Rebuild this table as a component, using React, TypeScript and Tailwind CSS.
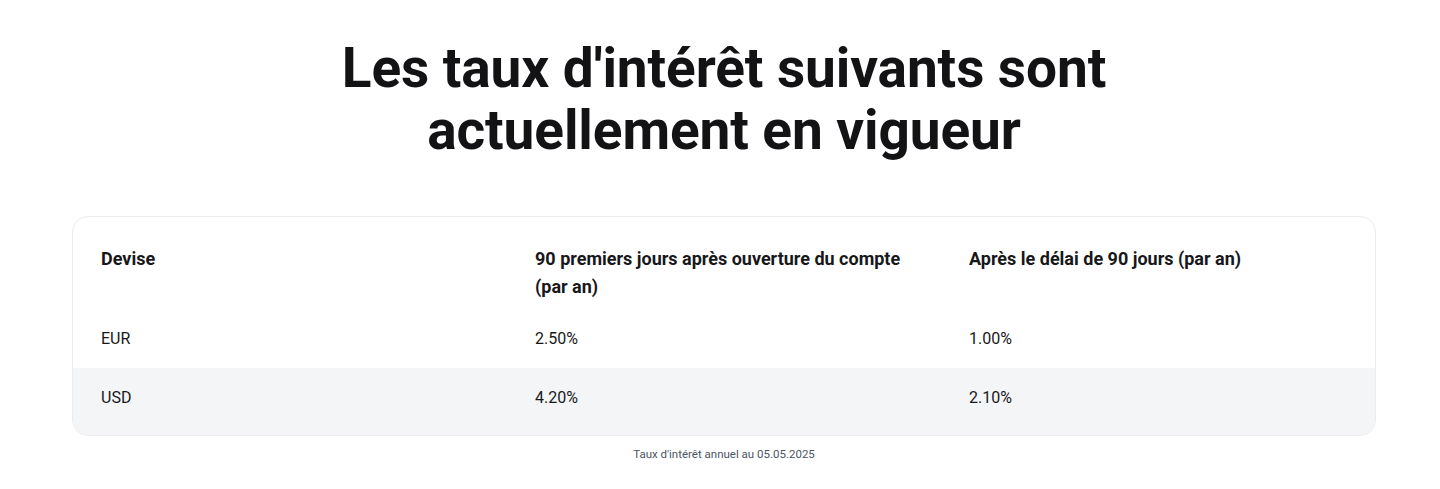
const ROWS = [
  { currency: "EUR", first: "2.50%", after: "1.00%" },
  { currency: "USD", first: "4.20%", after: "2.10%" },
];

export default function App() {
  return (
    <div className="min-h-screen bg-white pt-[37px] font-['Roboto',sans-serif] text-[#18181b]">
      <div className="ml-[72px] w-[1304px]">
        <h1 className="mx-auto max-w-[820px] text-center text-[55px] font-bold leading-[62px] tracking-[-0.1px] text-[#131316]">
          Les taux d'intérêt suivants sont actuellement en vigueur
        </h1>

        <div className="mt-[55px] overflow-hidden rounded-2xl border border-[#ececef]">
          <table className="w-full table-fixed text-left text-base">
            <thead>
              <tr className="align-top text-lg font-bold">
                <th className="px-7 pb-1.5 pt-7 leading-7">Devise</th>
                <th className="px-7 pb-1.5 pt-7 leading-7">
                  90 premiers jours après ouverture du compte (par an)
                </th>
                <th className="px-7 pb-1.5 pt-7 leading-7">
                  Après le délai de 90 jours (par an)
                </th>
              </tr>
            </thead>
            <tbody>
              {ROWS.map((r, i) => {
                const pad = i === 0 ? "pt-[18px] pb-[15px]" : "pt-4 pb-[23px]";
                return (
                  <tr key={r.currency} className={i % 2 === 1 ? "bg-[#f4f5f7]" : ""}>
                    <td className={`px-7 leading-7 ${pad}`}>{r.currency}</td>
                    <td className={`px-7 leading-7 ${pad}`}>{r.first}</td>
                    <td className={`px-7 leading-7 ${pad}`}>{r.after}</td>
                  </tr>
                );
              })}
            </tbody>
          </table>
        </div>

        <p className="mt-[10px] text-center text-[11.5px] leading-4 text-[#4b5563]">
          Taux d'intérêt annuel au 05.05.2025
        </p>
      </div>
    </div>
  );
}
